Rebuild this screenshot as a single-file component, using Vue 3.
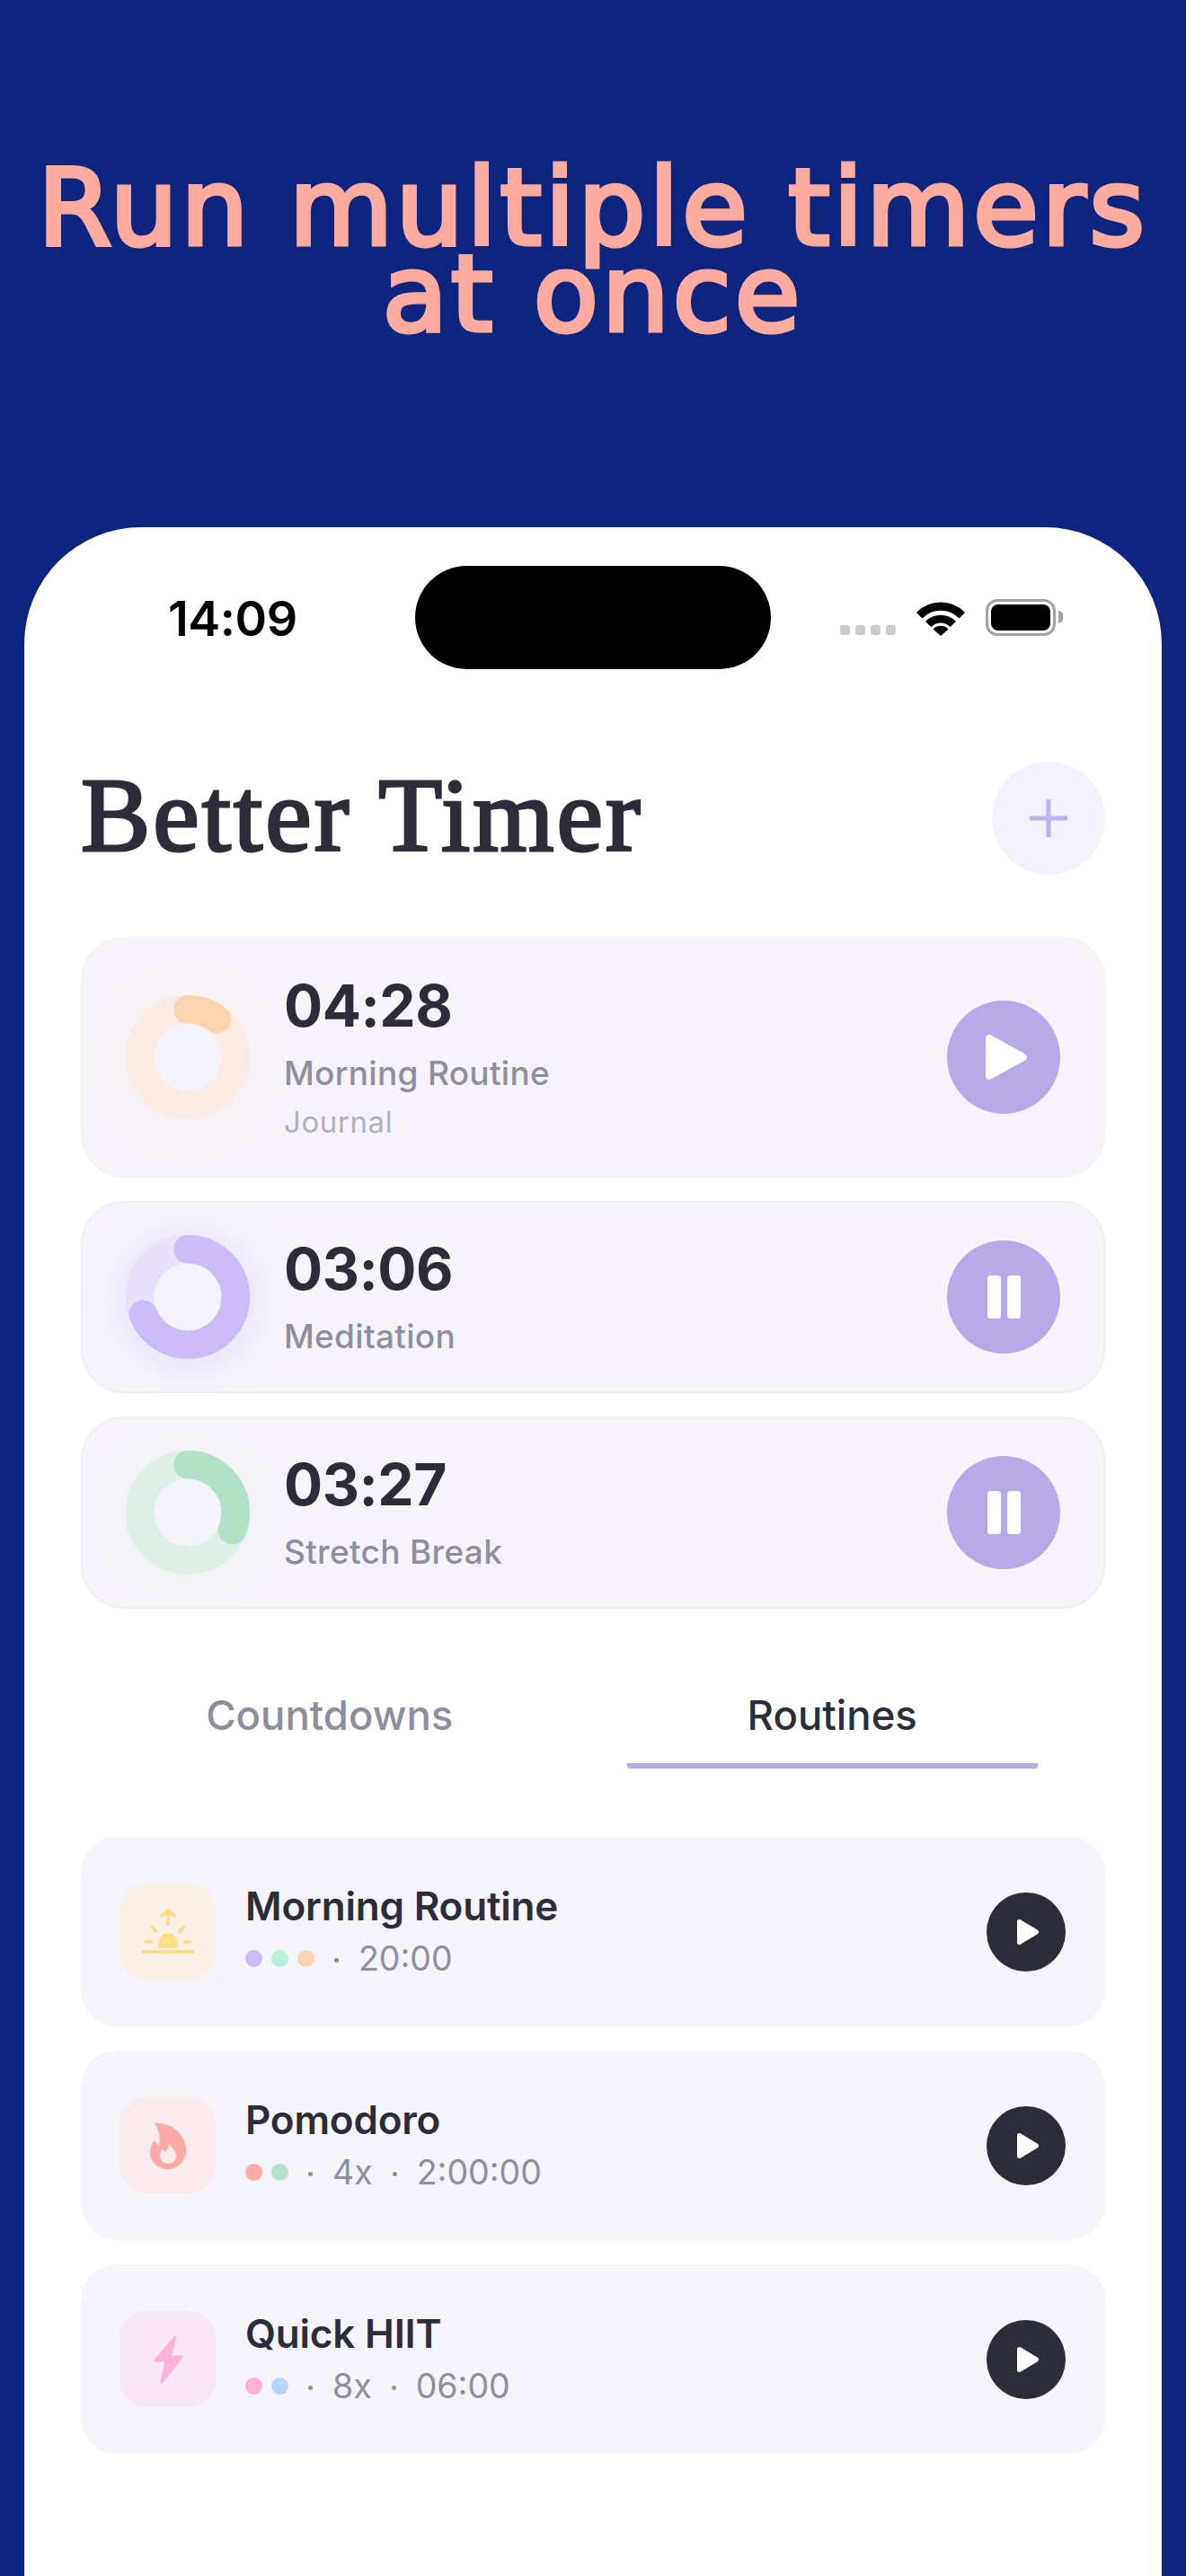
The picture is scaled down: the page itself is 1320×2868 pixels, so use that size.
<script setup>
const R = 53.25
const C = 2 * Math.PI * R
const timers = [
  { time: '04:28', name: 'Morning Routine', sub: 'Journal', pct: 0.104, track: '#faece4', arc: '#ffd3b0', glow: 'rgba(255,211,176,.1)', playing: false, tall: true },
  { time: '03:06', name: 'Meditation', pct: 0.69, track: '#e7e1fa', arc: '#cbbcf9', glow: 'rgba(203,188,249,.3)', playing: true },
  { time: '03:27', name: 'Stretch Break', pct: 0.31, track: '#dff0e9', arc: '#b1e2c8', glow: 'rgba(174,224,196,.08)', playing: true }
]
const routines = [
  { name: 'Morning Routine', icon: 'sun', tile: '#f9f1e5', dots: ['#cbbcf9', '#b5f2d8', '#ffd3b0'], meta: ['20:00'] },
  { name: 'Pomodoro', icon: 'fire', tile: '#faebee', dots: ['#ffaaa5', '#b5e2c9'], meta: ['4x', '2:00:00'] },
  { name: 'Quick HIIT', icon: 'bolt', tile: '#f7e8f3', dots: ['#fbb2d8', '#b5d6fb'], meta: ['8x', '06:00'] }
]
</script>

<template>
  <div class="page">
    <h1 class="hero">Run multiple timers<br />at once</h1>
    <main class="phone">
      <div class="status">
        <span class="clock">14:09</span>
        <div class="island"></div>
        <div class="status-icons">
          <div class="signal"><i></i><i></i><i></i><i></i></div>
          <svg class="wifi" width="54" height="42" viewBox="0 0 54 42">
            <path d="M1 16 A37 37 0 0 1 53 16 L47.500 21.500 A29 29 0 0 0 6.500 21.500 Z" fill="#000" stroke="#000" stroke-width="1.500" stroke-linejoin="round" />
            <path d="M11 26 A23 23 0 0 1 43 26 L37.500 31 A15 15 0 0 0 16.500 31 Z" fill="#000" stroke="#000" stroke-width="1.500" stroke-linejoin="round" />
            <path d="M19.500 34.500 A11 11 0 0 1 34.500 34.500 L27 41 Z" fill="#000" stroke="#000" stroke-width="1.500" stroke-linejoin="round" />
          </svg>
          <div class="battery"><div class="cell"></div><div class="nub"></div></div>
        </div>
      </div>

      <header class="head">
        <h2 class="brand">Better Timer</h2>
        <button class="add" aria-label="Add">
          <svg width="42" height="42" viewBox="0 0 42 42"><path d="M21 1V41M1 21H41" stroke="#c0b2ee" stroke-width="5" stroke-linecap="round" /></svg>
        </button>
      </header>

      <section class="timers">
        <article v-for="t in timers" :key="t.time" class="timer" :class="{ tall: t.tall }">
          <div class="ring">
            <svg width="180" height="180" viewBox="0 0 180 180">
              <circle cx="90" cy="94" r="76" :fill="t.glow" class="halo" />
              <circle cx="90" cy="90" :r="R" fill="#f5f3fa" :stroke="t.track" stroke-width="31.500" />
              <circle cx="90" cy="90" :r="R" fill="none" :stroke="t.arc" stroke-width="31.500" stroke-linecap="round"
                :stroke-dasharray="`${C * t.pct} ${C}`" transform="rotate(-90 90 90)" />
            </svg>
          </div>
          <div class="timer-text">
            <div class="time">{{ t.time }}</div>
            <div class="name">{{ t.name }}</div>
            <div v-if="t.sub" class="sub">{{ t.sub }}</div>
          </div>
          <button class="round" aria-label="Toggle">
            <svg v-if="t.playing" width="37" height="48" viewBox="0 0 37 48">
              <rect x="0" y="0" width="15" height="48" rx="3.500" fill="#fff" />
              <rect x="22" y="0" width="15" height="48" rx="3.500" fill="#fff" />
            </svg>
            <svg v-else class="play-big" width="48" height="52" viewBox="0 0 48 52">
              <path d="M5 5 L43 26 L5 47 Z" fill="#fff" stroke="#fff" stroke-width="8" stroke-linejoin="round" />
            </svg>
          </button>
        </article>
      </section>

      <nav class="tabs">
        <div class="tab">Countdowns</div>
        <div class="tab active">Routines</div>
      </nav>

      <section class="routines">
        <article v-for="r in routines" :key="r.name" class="routine">
          <div class="tile" :style="{ background: r.tile }">
            <svg v-if="r.icon === 'sun'" width="60" height="52" viewBox="0 0 60 52" fill="none" stroke="#ffdd85" stroke-width="3.500" stroke-linecap="round" stroke-linejoin="round">
              <path d="M30 18V2M23 8L30 1.500L37 8" />
              <path d="M12.500 20.500L17 25.500M47.500 20.500L43 25.500M5 37H12M48 37H55M2 48H58" />
              <path d="M20 43V38A10 10 0 0 1 40 38V43Z" fill="#ffdd85" stroke-width="1.500" />
            </svg>
            <svg v-else-if="r.icon === 'fire'" width="40" height="52" viewBox="0 0 40 52">
              <path fill-rule="evenodd" fill="#ffaaa5" d="M6.500 0.500 C22 0 40 12 40 31 C40 43 31 52 20 52 C9 52 0 44 0 34 C0 28 2.500 23 5 20 C6.500 23 8 24.500 10 25 C11.500 17 10 8 5.500 2.500 C5 1.500 5.500 0.500 6.500 0.500 Z M20 46 C26 46 29 42 29 37 C29 32 25 29 21.500 24.500 C21 29 18.500 30.500 16.500 33 C15 31.500 14.500 31 13.500 30 C12 32 11 34.500 11 37 C11 42 14.500 46 20 46 Z" />
            </svg>
            <svg v-else width="34" height="54" viewBox="0 0 34 54">
              <path d="M25 2 L3 28 H15 L10 52 L32 24 H19 Z" fill="#fbb2d8" stroke="#fbb2d8" stroke-width="3" stroke-linejoin="round" />
            </svg>
          </div>
          <div class="routine-text">
            <div class="routine-name">{{ r.name }}</div>
            <div class="meta">
              <div class="dots"><i v-for="d in r.dots" :key="d" :style="{ background: d }"></i></div>
              <template v-for="m in r.meta" :key="m">
                <b class="sep"></b>
                <span>{{ m }}</span>
              </template>
            </div>
          </div>
          <button class="dark" aria-label="Start">
            <svg width="26" height="30" viewBox="0 0 26 30"><path d="M3.500 3.500 L22.500 15 L3.500 26.500 Z" fill="#fff" stroke="#fff" stroke-width="5" stroke-linejoin="round" /></svg>
          </button>
        </article>
      </section>
    </main>
  </div>
</template>

<style>
html, body { margin: 0; background: #0e2580; }
</style>

<style scoped>
* { box-sizing: border-box; }
.page {
  width: 1320px;
  height: 2868px;
  background: #0e2580;
  overflow: hidden;
  font-family: Inter, "Liberation Sans", sans-serif;
  display: flex;
  flex-direction: column;
}
.hero {
  margin: 0;
  height: 587px;
  padding-top: 183px;
  text-align: center;
  color: #ffab9f;
  font-family: "DejaVu Sans", sans-serif;
  font-size: 118px;
  line-height: 96px;
  font-weight: 400;
  letter-spacing: 4px;
  -webkit-text-stroke: 5px #ffab9f;
  white-space: nowrap;
}
.phone {
  flex: 1;
  margin: 0 27px;
  background: #fff;
  border-radius: 130px 130px 0 0;
  padding: 43px 63px 0;
}
.status {
  height: 115px;
  display: flex;
  align-items: center;
  justify-content: space-between;
  position: relative;
}
.clock {
  margin-left: 97px;
  margin-top: 2px;
  font-size: 54px;
  font-weight: 600;
  color: #000;
  letter-spacing: -0.5px;
}
.island {
  position: absolute;
  left: 372px;
  top: 0;
  width: 396px;
  height: 115px;
  background: #000;
  border-radius: 58px;
}
.status-icons {
  display: flex;
  align-items: flex-start;
  margin-right: 55px;
  padding-top: 13px;
  height: 68px;
}
.signal { display: flex; gap: 6px; margin-top: 29px; margin-right: 23px; }
.signal i { width: 11px; height: 11px; border-radius: 3px; background: #cbcbcb; }
.wifi { margin-right: 23px; margin-top: -1px; }
.battery { position: relative; width: 78px; height: 41px; border: 3px solid #a3a3a3; border-radius: 13px; padding: 3px; }
.cell { width: 100%; height: 100%; background: #000; border-radius: 8px; }
.nub { position: absolute; right: -11px; top: 10px; width: 5px; height: 14px; background: #a3a3a3; border-radius: 0 5px 5px 0; }

.head {
  display: flex;
  align-items: center;
  justify-content: space-between;
  margin-top: 103px;
  height: 126px;
}
.brand {
  margin: 0 0 6px;
  font-family: "Liberation Serif", serif;
  font-size: 116px;
  font-weight: 400;
  -webkit-text-stroke: 3px #2d2d3a;
  letter-spacing: 3px;
  color: #2d2d3a;
  line-height: 1;
}
.add {
  width: 126px;
  height: 126px;
  border: 0;
  padding: 0;
  border-radius: 50%;
  background: #f3f1fd;
  display: flex;
  align-items: center;
  justify-content: center;
}

.timers { margin-top: 69px; display: flex; flex-direction: column; gap: 26px; }
.timer {
  height: 214px;
  background: #f6f4fa;
  border: 2px solid #f1edf5;
  border-radius: 48px;
  padding: 0 48px 0 27px;
  display: flex;
  align-items: center;
}
.timer.tall { height: 268px; border-color: #faf0ee; }
.ring { width: 180px; height: 180px; flex: none; }
.ring svg { display: block; overflow: visible; }
.halo { filter: blur(18px); }
.timer-text { flex: 1; margin-left: 17px; margin-top: -4px; }
.time { font-size: 64px; line-height: 76px; font-weight: 700; color: #2d2d3a; letter-spacing: -0.5px; }
.name { font-size: 37px; line-height: 44px; margin-top: 15px; font-weight: 500; color: #8e8e9e; letter-spacing: 0.3px; }
.sub { font-size: 33px; line-height: 40px; margin-top: 12px; color: #b0b0bc; letter-spacing: 0.6px; }
.round {
  width: 126px;
  height: 126px;
  flex: none;
  border: 0;
  padding: 0;
  border-radius: 50%;
  background: #b8a9e8;
  display: flex;
  align-items: center;
  justify-content: center;
}
.play-big { margin-left: 6px; }

.tabs {
  display: flex;
  gap: 102px;
  margin: 66px 75px 0 48px;
}
.tab {
  flex: 1;
  height: 112px;
  text-align: center;
  font-size: 45.500px;
  line-height: 106px;
  font-weight: 500;
  color: #8e8e9e;
}
.tab.active { color: #2d2d3a; border-bottom: 6px solid #b8a9e8; border-radius: 0 0 3px 3px; }

.routines { margin-top: 76px; display: flex; flex-direction: column; gap: 27px; }
.routine {
  height: 211px;
  background: #f5f4fa;
  border-radius: 40px;
  padding: 0 44px 0 43px;
  display: flex;
  align-items: center;
}
.tile {
  width: 107px;
  height: 107px;
  flex: none;
  border-radius: 30px;
  display: flex;
  align-items: center;
  justify-content: center;
}
.routine-text { flex: 1; margin-left: 33px; }
.routine-name { font-size: 44px; line-height: 52px; font-weight: 600; color: #2d2d3a; letter-spacing: -0.2px; }
.meta { display: flex; align-items: center; margin-top: 8px; font-size: 37.500px; line-height: 50px; color: #8e8e9e; }
.dots { display: flex; gap: 10px; }
.dots i { width: 19px; height: 19px; border-radius: 50%; }
.sep { width: 5px; height: 5px; border-radius: 50%; background: #8e8e9e; margin: 4px 22px 0 22px; }
.dark {
  width: 88px;
  height: 88px;
  flex: none;
  border: 0;
  padding: 0;
  border-radius: 50%;
  background: #2d2d3a;
  display: flex;
  align-items: center;
  justify-content: center;
}
.dark svg { margin-left: 3px; }
</style>
